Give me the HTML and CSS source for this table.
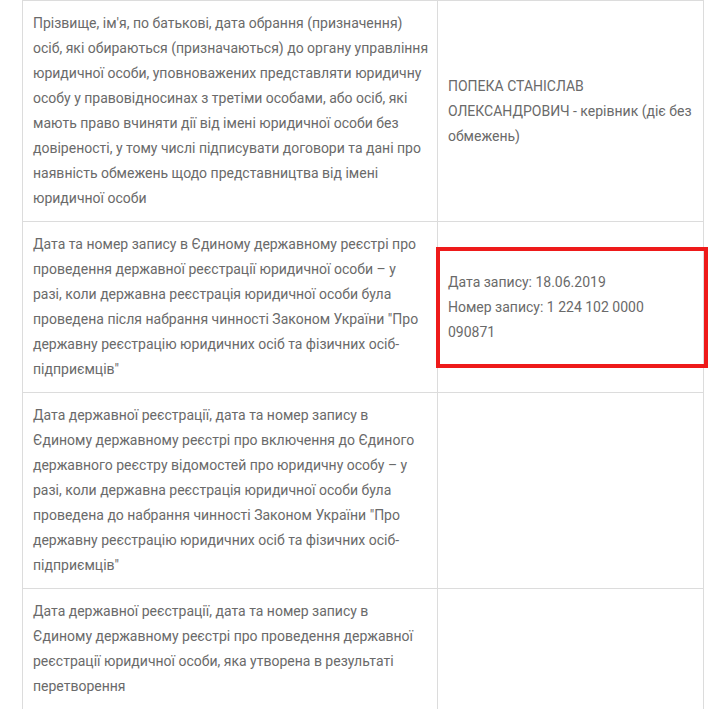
FILE: index.html
```html
<!DOCTYPE html>
<html lang="uk">
<head>
<meta charset="utf-8">
<title>Відомості</title>
<link rel="stylesheet" href="styles.css">
</head>
<body>
<div class="wrap">
  <div class="grid">
    <div class="cell label">Прізвище, ім'я, по батькові, дата обрання (призначення)<br>осіб, які обираються (призначаються) до органу управління<br>юридичної особи, уповноважених представляти юридичну<br>особу у правовідносинах з третіми особами, або осіб, які<br>мають право вчиняти дії від імені юридичної особи без<br>довіреності, у тому числі підписувати договори та дані про<br>наявність обмежень щодо представництва від імені<br>юридичної особи</div>
    <div class="cell value">ПОПЕКА СТАНІСЛАВ<br>ОЛЕКСАНДРОВИЧ - керівник (діє без<br>обмежень)</div>

    <div class="cell label">Дата та номер запису в Єдиному державному реєстрі про<br>проведення державної реєстрації юридичної особи – у<br>разі, коли державна реєстрація юридичної особи була<br>проведена після набрання чинності Законом України "Про<br>державну реєстрацію юридичних осіб та фізичних осіб-<br>підприємців"</div>
    <div class="cell value">Дата запису: 18.06.2019<br>Номер запису: 1 224 102 0000<br>090871</div>

    <div class="cell label">Дата державної реєстрації, дата та номер запису в<br>Єдиному державному реєстрі про включення до Єдиного<br>державного реєстру відомостей про юридичну особу – у<br>разі, коли державна реєстрація юридичної особи була<br>проведена до набрання чинності Законом України "Про<br>державну реєстрацію юридичних осіб та фізичних осіб-<br>підприємців"</div>
    <div class="cell value"></div>

    <div class="cell label">Дата державної реєстрації, дата та номер запису в<br>Єдиному державному реєстрі про проведення державної<br>реєстрації юридичної особи, яка утворена в результаті<br>перетворення</div>
    <div class="cell value"></div>
  </div>
  <div class="highlight"></div>
</div>
</body>
</html>
```

FILE: styles.css
```css
html, body {
  margin: 0;
  padding: 0;
  background: #ffffff;
}

body {
  font-family: Roboto, "Open Sans", sans-serif;
  font-size: 14px;
  color: #6a6a6a;
}

.wrap {
  position: relative;
  padding-left: 22px;
}

.grid {
  display: grid;
  grid-template-columns: 415px 266px;
  width: 682px;
  border-top: 1px solid #dcdcdc;
  border-left: 1px solid #dcdcdc;
  box-sizing: border-box;
}

.cell {
  box-sizing: border-box;
  padding: 10px;
  line-height: 25px;
  border-right: 1px solid #dcdcdc;
  border-bottom: 1px solid #dcdcdc;
  white-space: nowrap;
}

.value {
  display: flex;
  align-items: center;
}

.highlight {
  position: absolute;
  left: 436px;
  top: 247px;
  width: 272px;
  height: 121px;
  box-sizing: border-box;
  border: 4px solid #ee1a1a;
}
```
